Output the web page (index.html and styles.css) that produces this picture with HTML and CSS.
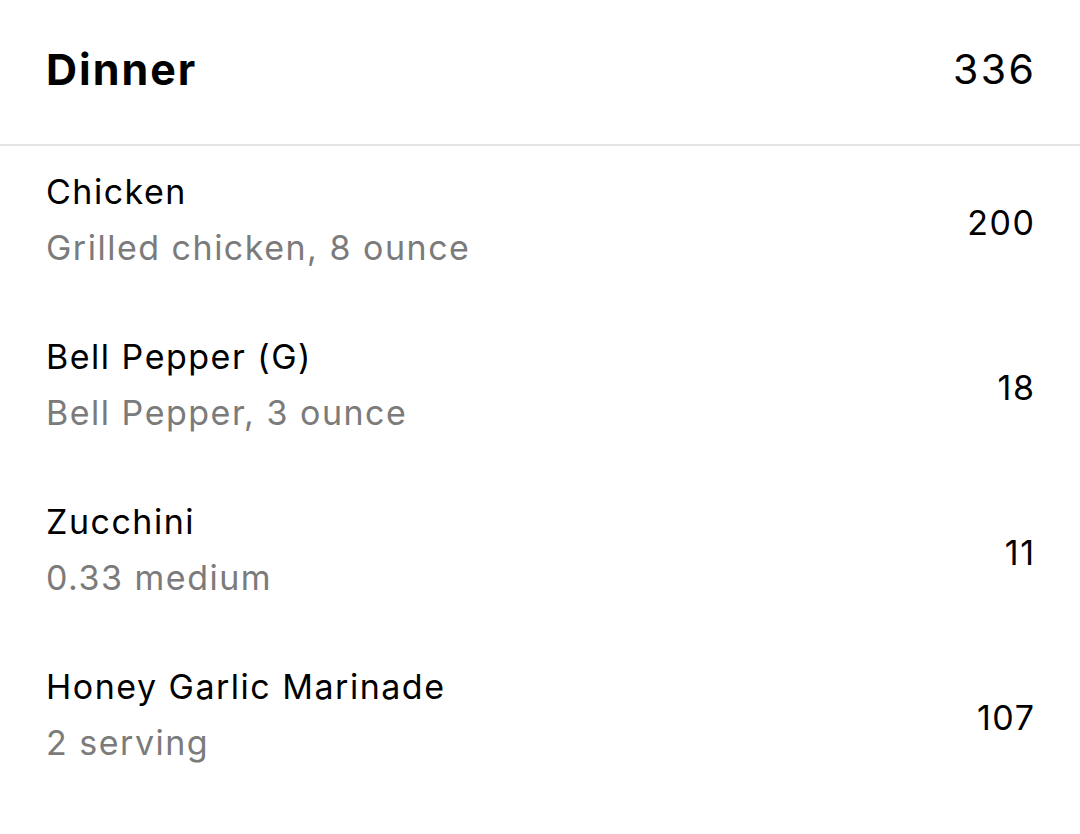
FILE: index.html
```html
<!DOCTYPE html>
<html lang="en">
<head>
<meta charset="utf-8">
<title>Dinner</title>
<link rel="stylesheet" href="styles.css">
</head>
<body>
<div class="meal">
  <div class="meal-header">
    <div class="meal-title">Dinner</div>
    <div class="meal-total">336</div>
  </div>
  <div class="items">
    <div class="item">
      <div class="item-text">
        <div class="item-name">Chicken</div>
        <div class="item-desc">Grilled chicken, 8 ounce</div>
      </div>
      <div class="item-cal">200</div>
    </div>
    <div class="item">
      <div class="item-text">
        <div class="item-name">Bell Pepper (G)</div>
        <div class="item-desc">Bell Pepper, 3 ounce</div>
      </div>
      <div class="item-cal">18</div>
    </div>
    <div class="item">
      <div class="item-text">
        <div class="item-name">Zucchini</div>
        <div class="item-desc">0.33 medium</div>
      </div>
      <div class="item-cal">11</div>
    </div>
    <div class="item">
      <div class="item-text">
        <div class="item-name">Honey Garlic Marinade</div>
        <div class="item-desc">2 serving</div>
      </div>
      <div class="item-cal">107</div>
    </div>
  </div>
</div>
</body>
</html>
```

FILE: styles.css
```css
html, body {
  margin: 0;
  padding: 0;
  background: #ffffff;
}
body {
  font-family: Inter, "Noto Sans", "Liberation Sans", sans-serif;
  color: #000000;
  width: 1080px;
  height: 834px;
  overflow: hidden;
}
.meal-header {
  height: 138px;
  padding: 0 46px 6px 46px;
  display: flex;
  align-items: center;
  justify-content: space-between;
  border-bottom: 2px solid #e4e4e6;
}
.meal-title {
  font-size: 43px;
  font-weight: 700;
  line-height: 56px;
  letter-spacing: 2px;
}
.meal-total {
  font-size: 41px;
  font-weight: 400;
  line-height: 56px;
  letter-spacing: 2.5px;
  margin-right: -2.5px;
}
.item {
  display: flex;
  align-items: center;
  justify-content: space-between;
  padding: 18px 46px 35px 46px;
  height: 112px;
}
.item-name {
  font-size: 34px;
  line-height: 56px;
  letter-spacing: 1.5px;
  color: #000000;
}
.item-desc {
  font-size: 34px;
  line-height: 56px;
  letter-spacing: 1.5px;
  color: #7b7b7b;
}
.item-cal {
  font-size: 34px;
  line-height: 56px;
  letter-spacing: 1.6px;
  margin-right: -1.6px;
  padding-top: 5px;
}
```
